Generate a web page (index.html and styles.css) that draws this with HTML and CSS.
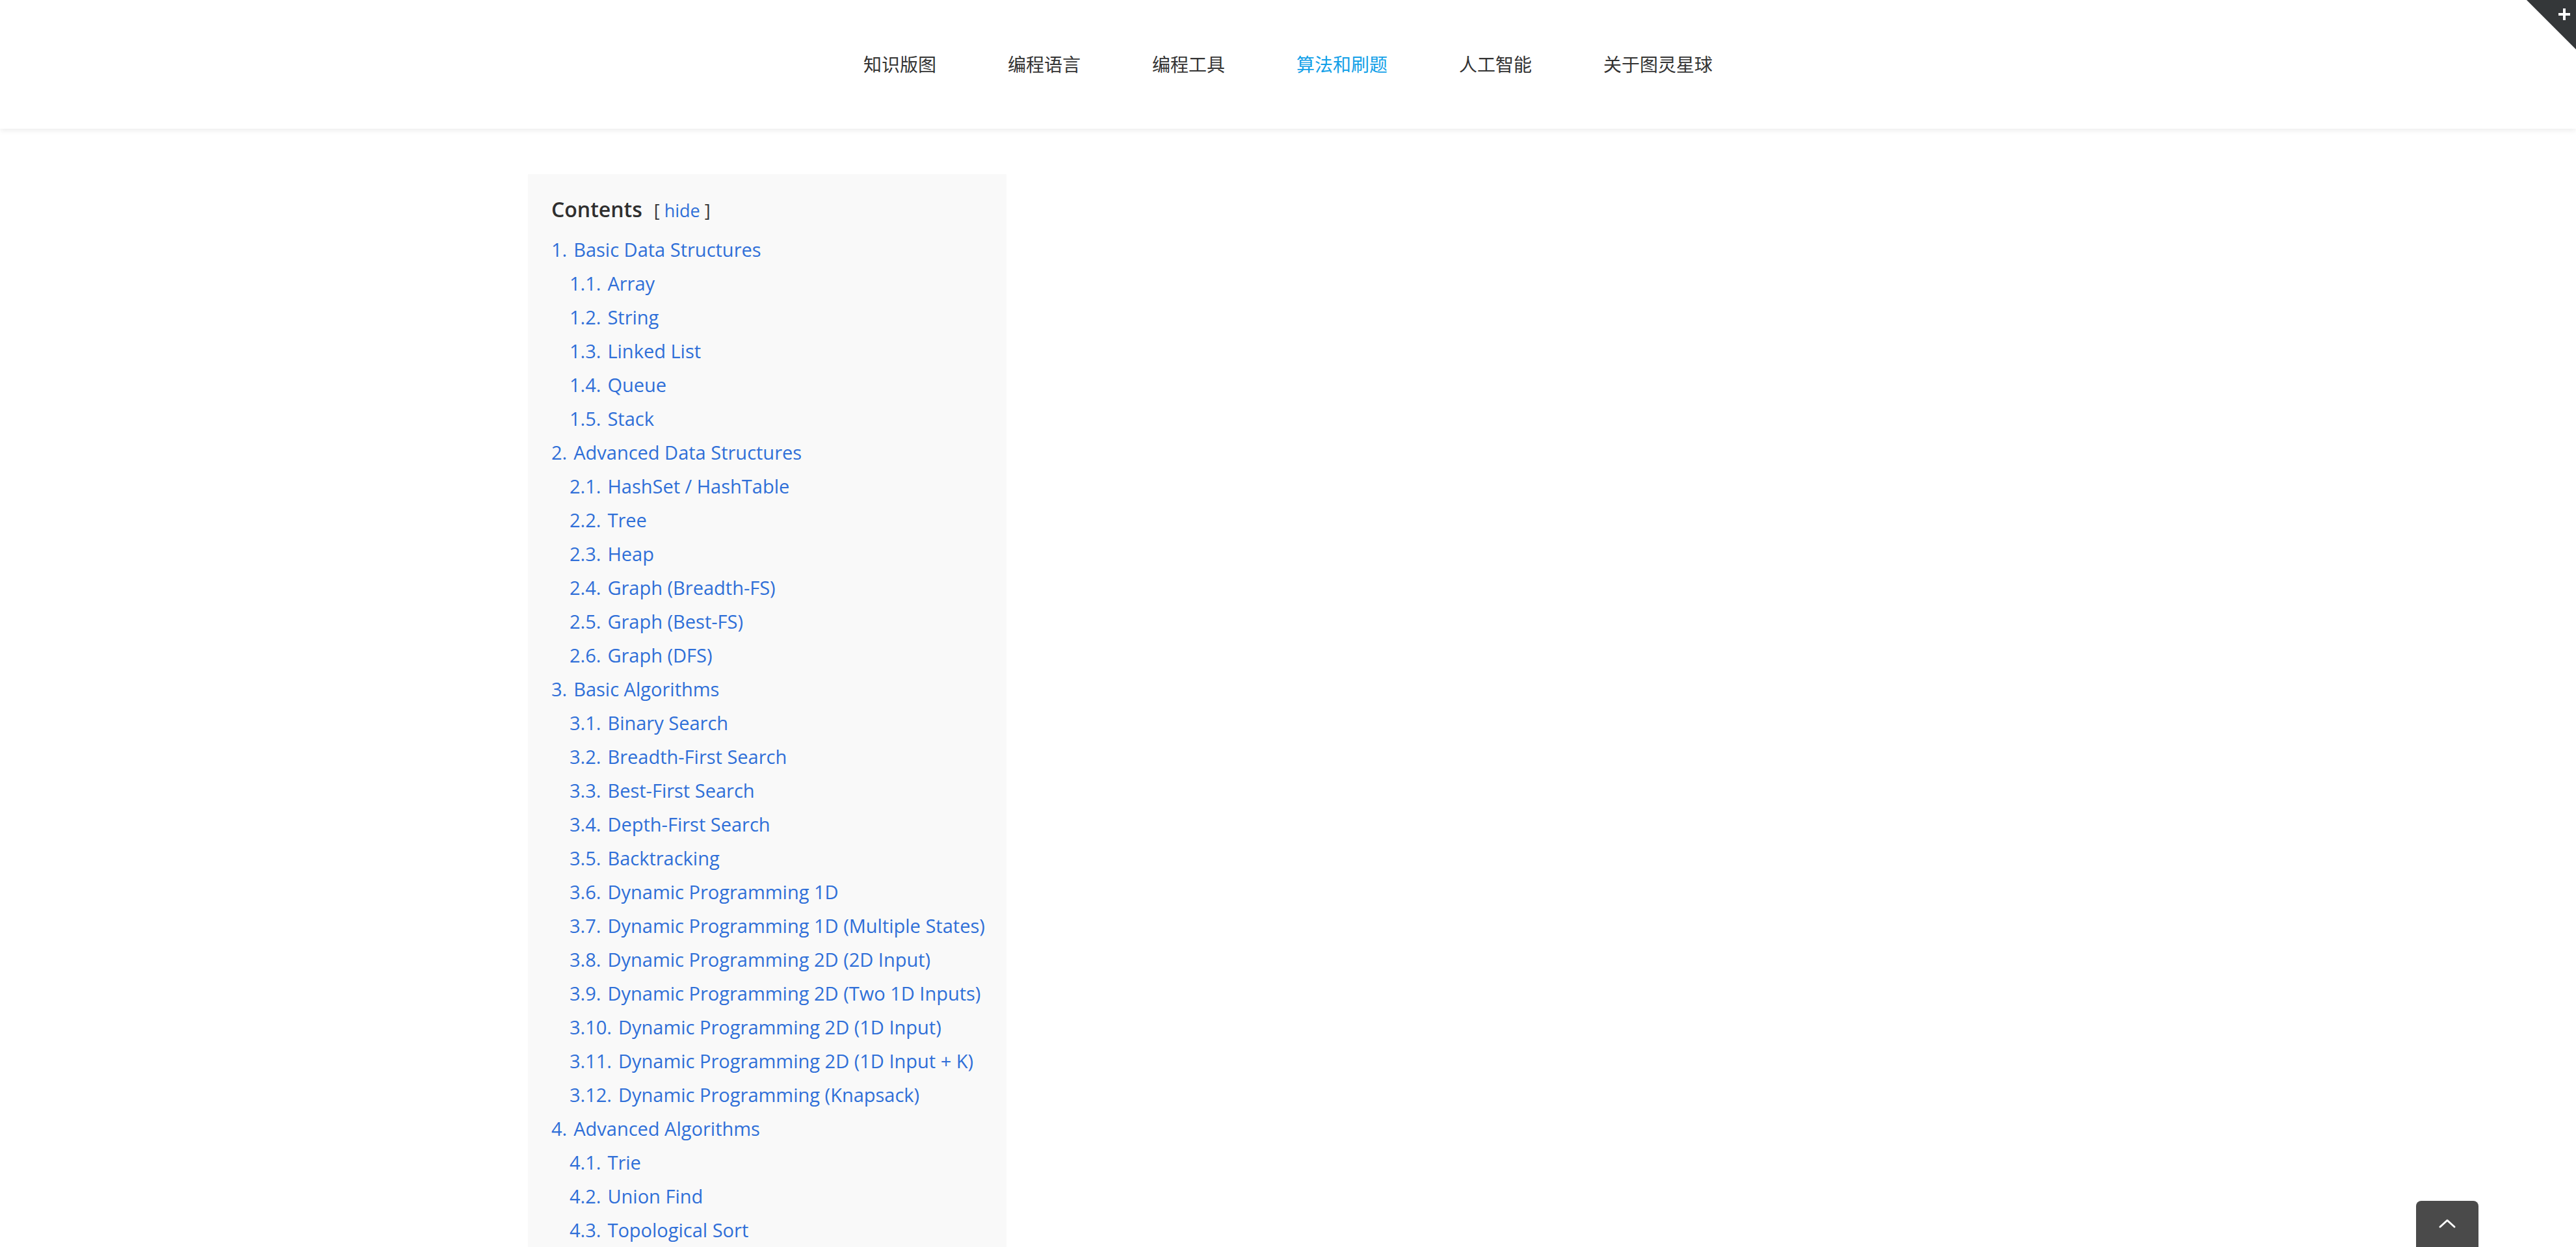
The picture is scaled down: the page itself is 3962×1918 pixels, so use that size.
FILE: index.html
```html
<!DOCTYPE html>
<html lang="zh-CN">
<head>
<meta charset="utf-8">
<title>算法和刷题</title>
<link rel="stylesheet" href="styles.css">
</head>
<body>
<header class="site-header">
  <nav class="main-nav">
    <a href="#">知识版图</a>
    <a href="#">编程语言</a>
    <a href="#">编程工具</a>
    <a href="#" class="active">算法和刷题</a>
    <a href="#">人工智能</a>
    <a href="#">关于图灵星球</a>
  </nav>
  <a href="#" class="corner-toggle" aria-label="open">
    <svg width="76" height="76" viewBox="0 0 76 76">
      <polygon points="0,0 76,0 76,76" fill="#343739"/>
      <rect x="49" y="20" width="18" height="4" fill="#fff"/>
      <rect x="56" y="13" width="4" height="18" fill="#fff"/>
    </svg>
  </a>
</header>

<main class="page">
  <div class="toc">
    <div class="toc-head">
      <span class="toc-title">Contents</span>
      <span class="toc-toggle">[ <a href="#">hide</a> ]</span>
    </div>
    <ul class="toc-list">
      <li><a href="#"><span class="n">1.</span>Basic Data Structures</a>
        <ul>
          <li><a href="#"><span class="n">1.1.</span>Array</a></li>
          <li><a href="#"><span class="n">1.2.</span>String</a></li>
          <li><a href="#"><span class="n">1.3.</span>Linked List</a></li>
          <li><a href="#"><span class="n">1.4.</span>Queue</a></li>
          <li><a href="#"><span class="n">1.5.</span>Stack</a></li>
        </ul>
      </li>
      <li><a href="#"><span class="n">2.</span>Advanced Data Structures</a>
        <ul>
          <li><a href="#"><span class="n">2.1.</span>HashSet / HashTable</a></li>
          <li><a href="#"><span class="n">2.2.</span>Tree</a></li>
          <li><a href="#"><span class="n">2.3.</span>Heap</a></li>
          <li><a href="#"><span class="n">2.4.</span>Graph (Breadth-FS)</a></li>
          <li><a href="#"><span class="n">2.5.</span>Graph (Best-FS)</a></li>
          <li><a href="#"><span class="n">2.6.</span>Graph (DFS)</a></li>
        </ul>
      </li>
      <li><a href="#"><span class="n">3.</span>Basic Algorithms</a>
        <ul>
          <li><a href="#"><span class="n">3.1.</span>Binary Search</a></li>
          <li><a href="#"><span class="n">3.2.</span>Breadth-First Search</a></li>
          <li><a href="#"><span class="n">3.3.</span>Best-First Search</a></li>
          <li><a href="#"><span class="n">3.4.</span>Depth-First Search</a></li>
          <li><a href="#"><span class="n">3.5.</span>Backtracking</a></li>
          <li><a href="#"><span class="n">3.6.</span>Dynamic Programming 1D</a></li>
          <li><a href="#"><span class="n">3.7.</span>Dynamic Programming 1D (Multiple States)</a></li>
          <li><a href="#"><span class="n">3.8.</span>Dynamic Programming 2D (2D Input)</a></li>
          <li><a href="#"><span class="n">3.9.</span>Dynamic Programming 2D (Two 1D Inputs)</a></li>
          <li><a href="#"><span class="n">3.10.</span>Dynamic Programming 2D (1D Input)</a></li>
          <li><a href="#"><span class="n">3.11.</span>Dynamic Programming 2D (1D Input + K)</a></li>
          <li><a href="#"><span class="n">3.12.</span>Dynamic Programming (Knapsack)</a></li>
        </ul>
      </li>
      <li><a href="#"><span class="n">4.</span>Advanced Algorithms</a>
        <ul>
          <li><a href="#"><span class="n">4.1.</span>Trie</a></li>
          <li><a href="#"><span class="n">4.2.</span>Union Find</a></li>
          <li><a href="#"><span class="n">4.3.</span>Topological Sort</a></li>
        </ul>
      </li>
    </ul>
  </div>
</main>

<a href="#" class="to-top" aria-label="Go to top">
  <svg width="28" height="16" viewBox="0 0 28 16">
    <polyline points="3,13 14,3 25,13" fill="none" stroke="#fff" stroke-width="3" stroke-linecap="round" stroke-linejoin="round"/>
  </svg>
</a>
</body>
</html>
```

FILE: styles.css
```css
* { box-sizing: border-box; }

html, body {
  margin: 0;
  padding: 0;
  background: #ffffff;
}

body {
  font-family: "Open Sans", "Noto Sans", "Noto Sans CJK SC", sans-serif;
  color: #333;
  overflow: hidden;
}

.site-header {
  position: relative;
  z-index: 2;
  height: 198px;
  background: #fff;
  box-shadow: 0 2px 9px rgba(0, 0, 0, 0.09);
  display: flex;
  justify-content: center;
  align-items: center;
}

.main-nav {
  display: flex;
  gap: 110px;
  padding-bottom: 2px;
}

.main-nav a {
  font-family: "Noto Sans CJK SC", "Noto Sans", sans-serif;
  font-size: 28px;
  line-height: 40px;
  color: #333;
  text-decoration: none;
}

.main-nav a.active {
  color: #12a0e8;
}

.corner-toggle {
  position: absolute;
  top: 0;
  right: 0;
  width: 76px;
  height: 76px;
  display: block;
}

.corner-toggle svg {
  display: block;
}

.page {
  width: 2338px;
  margin: 0 auto;
  padding-top: 70px;
}

.toc {
  width: 736px;
  background: #f9f9f9;
  padding: 31px 36px 0 36px;
}

.toc-head {
  display: flex;
  align-items: baseline;
  gap: 18px;
  margin-bottom: 14px;
}

.toc-title {
  font-size: 32px;
  font-weight: 600;
  line-height: 45px;
  color: #2f2f2f;
}

.toc-toggle {
  font-size: 27px;
  color: #333;
}

.toc-toggle a {
  color: #2f6fd8;
  text-decoration: none;
}

.toc-list,
.toc-list ul {
  list-style: none;
  margin: 0;
  padding: 0;
}

.toc-list ul {
  padding-left: 28px;
}

.toc-list a {
  display: block;
  font-size: 29px;
  line-height: 52px;
  color: #2f6fd8;
  text-decoration: none;
  white-space: nowrap;
}

.toc-list .n {
  margin-right: 10px;
}

.to-top {
  position: fixed;
  right: 150px;
  bottom: 0;
  width: 96px;
  height: 71px;
  background: #4a4a4a;
  border-radius: 8px 8px 0 0;
  display: flex;
  justify-content: center;
  align-items: center;
  padding-bottom: 1px;
}

.to-top svg {
  display: block;
}
```
